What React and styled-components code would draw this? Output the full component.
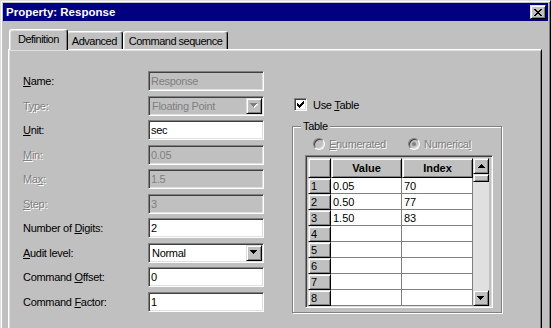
import React from 'react';
import styled, { createGlobalStyle, css } from 'styled-components';

const GlobalStyle = createGlobalStyle`
    html, body {
        margin: 0;
        padding: 0;
        background: #c0c0c0;
        overflow: hidden;
    }
    body {
        font-family: 'Liberation Sans', Arial, sans-serif;
        font-size: 11px;
        letter-spacing: -0.3px;
        color: #000;
    }
`;

// classic 3d edges
const sunken = css`
    border: 1px solid;
    border-color: #808080 #fff #fff #808080;
    box-shadow: inset 1px 1px #404040, inset -1px -1px #dfdfdf;
`;

const raised = css`
    border: 1px solid;
    border-color: #dfdfdf #000 #000 #dfdfdf;
    box-shadow: inset 1px 1px #fff, inset -1px -1px #808080;
`;

const Window = styled.div`
    box-sizing: border-box;
    width: 551px;
    height: 380px;
    padding: 2px;
    border: 1px solid;
    border-color: #dfdfdf #000 #000 #dfdfdf;
    box-shadow: inset 1px 1px #fff, inset -1px -1px #808080;
    background: #c0c0c0;
    display: flex;
    flex-direction: column;
`;

const TitleBar = styled.div`
    height: 18px;
    flex: none;
    display: flex;
    align-items: center;
    justify-content: space-between;
    padding: 0 2px 0 3px;
    background: #000080;
    color: #fff;
    font-weight: bold;
    font-size: 11.5px;
    letter-spacing: 0;
`;

const CloseButton = styled.div`
    box-sizing: border-box;
    width: 16px;
    height: 14px;
    ${raised};
    background: #c0c0c0;
    display: flex;
    align-items: center;
    justify-content: center;
    padding-right: 1px;
`;

const Body = styled.div`
    flex: 1;
    display: flex;
    flex-direction: column;
    padding: 8px 6px 0 5px;
`;

const TabRow = styled.div`
    display: flex;
    align-items: flex-end;
    height: 20px;
    padding-left: 3px;
`;

const Tab = styled.div`
    box-sizing: border-box;
    height: ${p => (p.$active ? '21px' : '18px')};
    margin: ${p => (p.$active ? '0 -2px -1px -2px' : '0')};
    padding: ${p => (p.$active ? '3px 8px 0' : '0 5px')};
    position: relative;
    z-index: ${p => (p.$active ? 1 : 0)};
    display: flex;
    align-items: ${p => (p.$active ? 'flex-start' : 'center')};
    background: #c0c0c0;
    border-top: 1px solid #fff;
    border-left: 1px solid #fff;
    border-right: 1px solid #000;
    border-radius: 3px 3px 0 0;
    box-shadow: inset -1px 0 #808080, inset 1px 1px #dfdfdf;
    white-space: nowrap;
    letter-spacing: -0.5px;
`;

const Panel = styled.div`
    flex: 1;
    border: 1px solid;
    border-color: #fff #000 #000 #fff;
    box-shadow: inset 1px 1px #dfdfdf, inset -1px -1px #808080;
    padding: 21px 0 0 14px;
    display: flex;
    gap: 28px;
    align-items: flex-start;
`;

const Form = styled.div`
    display: grid;
    grid-template-columns: 125px 116px;
    grid-auto-rows: 20px;
    row-gap: 4.56px;
`;

const Label = styled.label`
    display: flex;
    align-items: center;
    white-space: pre;
    color: ${p => (p.$disabled ? '#808080' : '#000')};
    text-shadow: ${p => (p.$disabled ? '1px 1px 0 #fff' : 'none')};
`;

const TextBox = styled.input`
    box-sizing: border-box;
    width: 116px;
    height: 20px;
    margin: 0;
    padding: 0 2px;
    ${sunken};
    outline: none;
    font: inherit;
    letter-spacing: inherit;
    background: ${p => (p.disabled ? '#c0c0c0' : '#fff')};
    color: ${p => (p.disabled ? '#808080' : '#000')};
    -webkit-text-fill-color: ${p => (p.disabled ? '#808080' : '#000')};
    opacity: 1;
`;

const Combo = styled.div`
    box-sizing: border-box;
    width: 116px;
    height: 20px;
    padding: 1px;
    ${sunken};
    background: ${p => (p.$disabled ? '#c0c0c0' : '#fff')};
    color: ${p => (p.$disabled ? '#808080' : '#000')};
    display: flex;
    align-items: center;
`;

const ComboText = styled.span`
    flex: 1;
    padding-left: 2px;
    white-space: nowrap;
`;

const ArrowButton = styled.div`
    box-sizing: border-box;
    width: 16px;
    height: 16px;
    flex: none;
    ${raised};
    background: #c0c0c0;
    display: flex;
    align-items: center;
    justify-content: center;
`;

const Right = styled.div`
    width: 211px;
    margin-top: 27px;
    display: flex;
    flex-direction: column;
`;

const CheckRow = styled.div`
    display: flex;
    align-items: center;
    gap: 6px;
    margin-left: 2px;
    height: 13px;
`;

const CheckBox = styled.span`
    box-sizing: border-box;
    width: 13px;
    height: 13px;
    ${sunken};
    background: #fff;
    display: flex;
    align-items: center;
    justify-content: center;
`;

const GroupBox = styled.div`
    box-sizing: border-box;
    margin-top: 15px;
    width: 210px;
    height: 187px;
    border: 1px solid #808080;
    box-shadow: inset 1px 1px #fff, 1px 1px #fff;
    padding: 0 0 0 12px;
    display: flex;
    flex-direction: column;
    align-items: flex-start;
`;

const Legend = styled.span`
    margin: -7px 0 0 -4px;
    padding: 0 2px;
    line-height: 13px;
    background: #c0c0c0;
`;

const RadioRow = styled.div`
    display: flex;
    margin: 4px 0 0 8px;
    height: 13px;
`;

const RadioItem = styled.div`
    display: flex;
    align-items: center;
    gap: 4px;
    width: ${p => p.$width || 'auto'};
    color: #808080;
    text-shadow: 1px 1px 0 #fff;
`;

const Radio = styled.span`
    box-sizing: border-box;
    width: 12px;
    height: 12px;
    border-radius: 50%;
    border: 1px solid;
    border-color: #808080 #fff #fff #808080;
    box-shadow: inset 1px 1px #404040, inset -1px -1px #dfdfdf;
    background: #c0c0c0;
    display: flex;
    align-items: center;
    justify-content: center;
    &::after {
        content: '';
        width: 4px;
        height: 4px;
        border-radius: 50%;
        background: ${p => (p.$checked ? '#808080' : 'transparent')};
    }
`;

const GridFrame = styled.div`
    box-sizing: border-box;
    width: 188px;
    height: 153px;
    margin-top: 5px;
    ${sunken};
    padding: 2px 3px 1px 2px;
    background: #c0c0c0;
    display: flex;
`;

const Table = styled.div`
    display: grid;
    grid-template-columns: 23px 71px 71px;
    grid-template-rows: 20px;
    grid-auto-rows: 16px;
`;

const HeadCell = styled.div`
    box-sizing: border-box;
    ${raised};
    background: #c0c0c0;
    display: flex;
    align-items: center;
    justify-content: ${p => (p.$left ? 'flex-start' : 'center')};
    padding-left: ${p => (p.$left ? '2px' : '0')};
    font-weight: ${p => (p.$bold ? 'bold' : 'normal')};
    letter-spacing: 0;
`;

const Cell = styled.div`
    box-sizing: border-box;
    background: #fff;
    border-right: 1px solid #808080;
    border-bottom: 1px solid #808080;
    padding-left: 2px;
    display: flex;
    align-items: center;
    letter-spacing: 0;
`;

const ScrollBar = styled.div`
    width: 16px;
    display: flex;
    flex-direction: column;
    background: #e0e0e0;
`;

const Thumb = styled.div`
    box-sizing: border-box;
    height: 8px;
    ${raised};
    background: #c0c0c0;
`;

const Track = styled.div`
    flex: 1;
`;

const DownArrow = ({ disabled }) => (
    <svg width="8" height="5" viewBox="0 0 8 5" shapeRendering="crispEdges">
        {disabled && <path d="M1 1h7v1H1zM2 2h5v1H2zM3 3h3v1H3zM4 4h1v1H4z" fill="#fff" />}
        <path d="M0 0h7v1H0zM1 1h5v1H1zM2 2h3v1H2zM3 3h1v1H3z" fill={disabled ? '#808080' : '#000'} />
    </svg>
);

const UpArrow = () => (
    <svg width="7" height="4" viewBox="0 0 7 4" shapeRendering="crispEdges">
        <path d="M3 0h1v1H3zM2 1h3v1H2zM1 2h5v1H1zM0 3h7v1H0z" fill="#000" />
    </svg>
);

const CloseGlyph = () => (
    <svg width="8" height="7" viewBox="0 0 8 7" shapeRendering="crispEdges">
        <path
            d="M0 0h2v1H0zM6 0h2v1H6zM1 1h2v1H1zM5 1h2v1H5zM2 2h4v1H2zM3 3h2v1H3zM2 4h4v1H2zM1 5h2v1H1zM5 5h2v1H5zM0 6h2v1H0zM6 6h2v1H6z"
            fill="#000"
        />
    </svg>
);

const CheckGlyph = () => (
    <svg width="7" height="7" viewBox="0 0 7 7" shapeRendering="crispEdges">
        <path
            d="M6 0h1v1H6zM5 1h2v1H5zM0 2h1v1H0zM4 2h3v1H4zM0 3h2v1H0zM3 3h3v1H3zM0 4h5v1H0zM1 5h3v1H1zM2 6h1v1H2z"
            fill="#000"
        />
    </svg>
);

// underline the access key letter
const Hot = ({ text, at }) => (
    <span>
        {text.slice(0, at)}
        <u>{text[at]}</u>
        {text.slice(at + 1)}
    </span>
);

const fields = [
    { label: 'Name:', at: 0, value: 'Response', inputDisabled: true },
    { label: 'Type:', at: 1, value: 'Floating Point', disabled: true, combo: true },
    { label: 'Unit:', at: 0, value: 'sec' },
    { label: 'Min:', at: 0, value: '0.05', disabled: true },
    { label: 'Max:', at: 2, value: '1.5', disabled: true },
    { label: 'Step:', at: 0, value: '3', disabled: true },
    { label: 'Number of Digits:', at: 10, value: '2' },
    { label: 'Audit level:', at: 0, value: 'Normal', combo: true },
    { label: 'Command Offset:', at: 8, value: '0' },
    { label: 'Command Factor:', at: 8, value: '1' },
];

const rows = [
    ['0.05', '70'],
    ['0.50', '77'],
    ['1.50', '83'],
    ['', ''],
    ['', ''],
    ['', ''],
    ['', ''],
    ['', ''],
];

const App = () => {
    return (
        <>
            <GlobalStyle />
            <Window>
                <TitleBar>
                    <span>Property: Response</span>
                    <CloseButton>
                        <CloseGlyph />
                    </CloseButton>
                </TitleBar>
                <Body>
                    <TabRow>
                        <Tab $active>Definition</Tab>
                        <Tab>Advanced</Tab>
                        <Tab>Command sequence</Tab>
                    </TabRow>
                    <Panel>
                        <Form>
                            {fields.map(f => (
                                <React.Fragment key={f.label}>
                                    <Label $disabled={f.disabled}>
                                        <Hot text={f.label} at={f.at} />
                                    </Label>
                                    {f.combo ? (
                                        <Combo $disabled={f.disabled}>
                                            <ComboText>{f.value}</ComboText>
                                            <ArrowButton>
                                                <DownArrow disabled={f.disabled} />
                                            </ArrowButton>
                                        </Combo>
                                    ) : (
                                        <TextBox
                                            defaultValue={f.value}
                                            disabled={f.disabled || f.inputDisabled}
                                            readOnly
                                        />
                                    )}
                                </React.Fragment>
                            ))}
                        </Form>
                        <Right>
                            <CheckRow>
                                <CheckBox>
                                    <CheckGlyph />
                                </CheckBox>
                                <span>
                                    Use <u>T</u>able
                                </span>
                            </CheckRow>
                            <GroupBox>
                                <Legend>Table</Legend>
                                <RadioRow>
                                    <RadioItem $width="95px">
                                        <Radio />
                                        <span>
                                            <u>E</u>numerated
                                        </span>
                                    </RadioItem>
                                    <RadioItem>
                                        <Radio $checked />
                                        <span>
                                            Numerica<u>l</u>
                                        </span>
                                    </RadioItem>
                                </RadioRow>
                                <GridFrame>
                                    <Table>
                                        <HeadCell />
                                        <HeadCell $bold>Value</HeadCell>
                                        <HeadCell $bold>Index</HeadCell>
                                        {rows.map((r, i) => (
                                            <React.Fragment key={i}>
                                                <HeadCell $left>{i + 1}</HeadCell>
                                                <Cell>{r[0]}</Cell>
                                                <Cell>{r[1]}</Cell>
                                            </React.Fragment>
                                        ))}
                                    </Table>
                                    <ScrollBar>
                                        <ArrowButton>
                                            <UpArrow />
                                        </ArrowButton>
                                        <Thumb />
                                        <Track />
                                        <ArrowButton>
                                            <DownArrow />
                                        </ArrowButton>
                                    </ScrollBar>
                                </GridFrame>
                            </GroupBox>
                        </Right>
                    </Panel>
                </Body>
            </Window>
        </>
    );
};

export default App;
